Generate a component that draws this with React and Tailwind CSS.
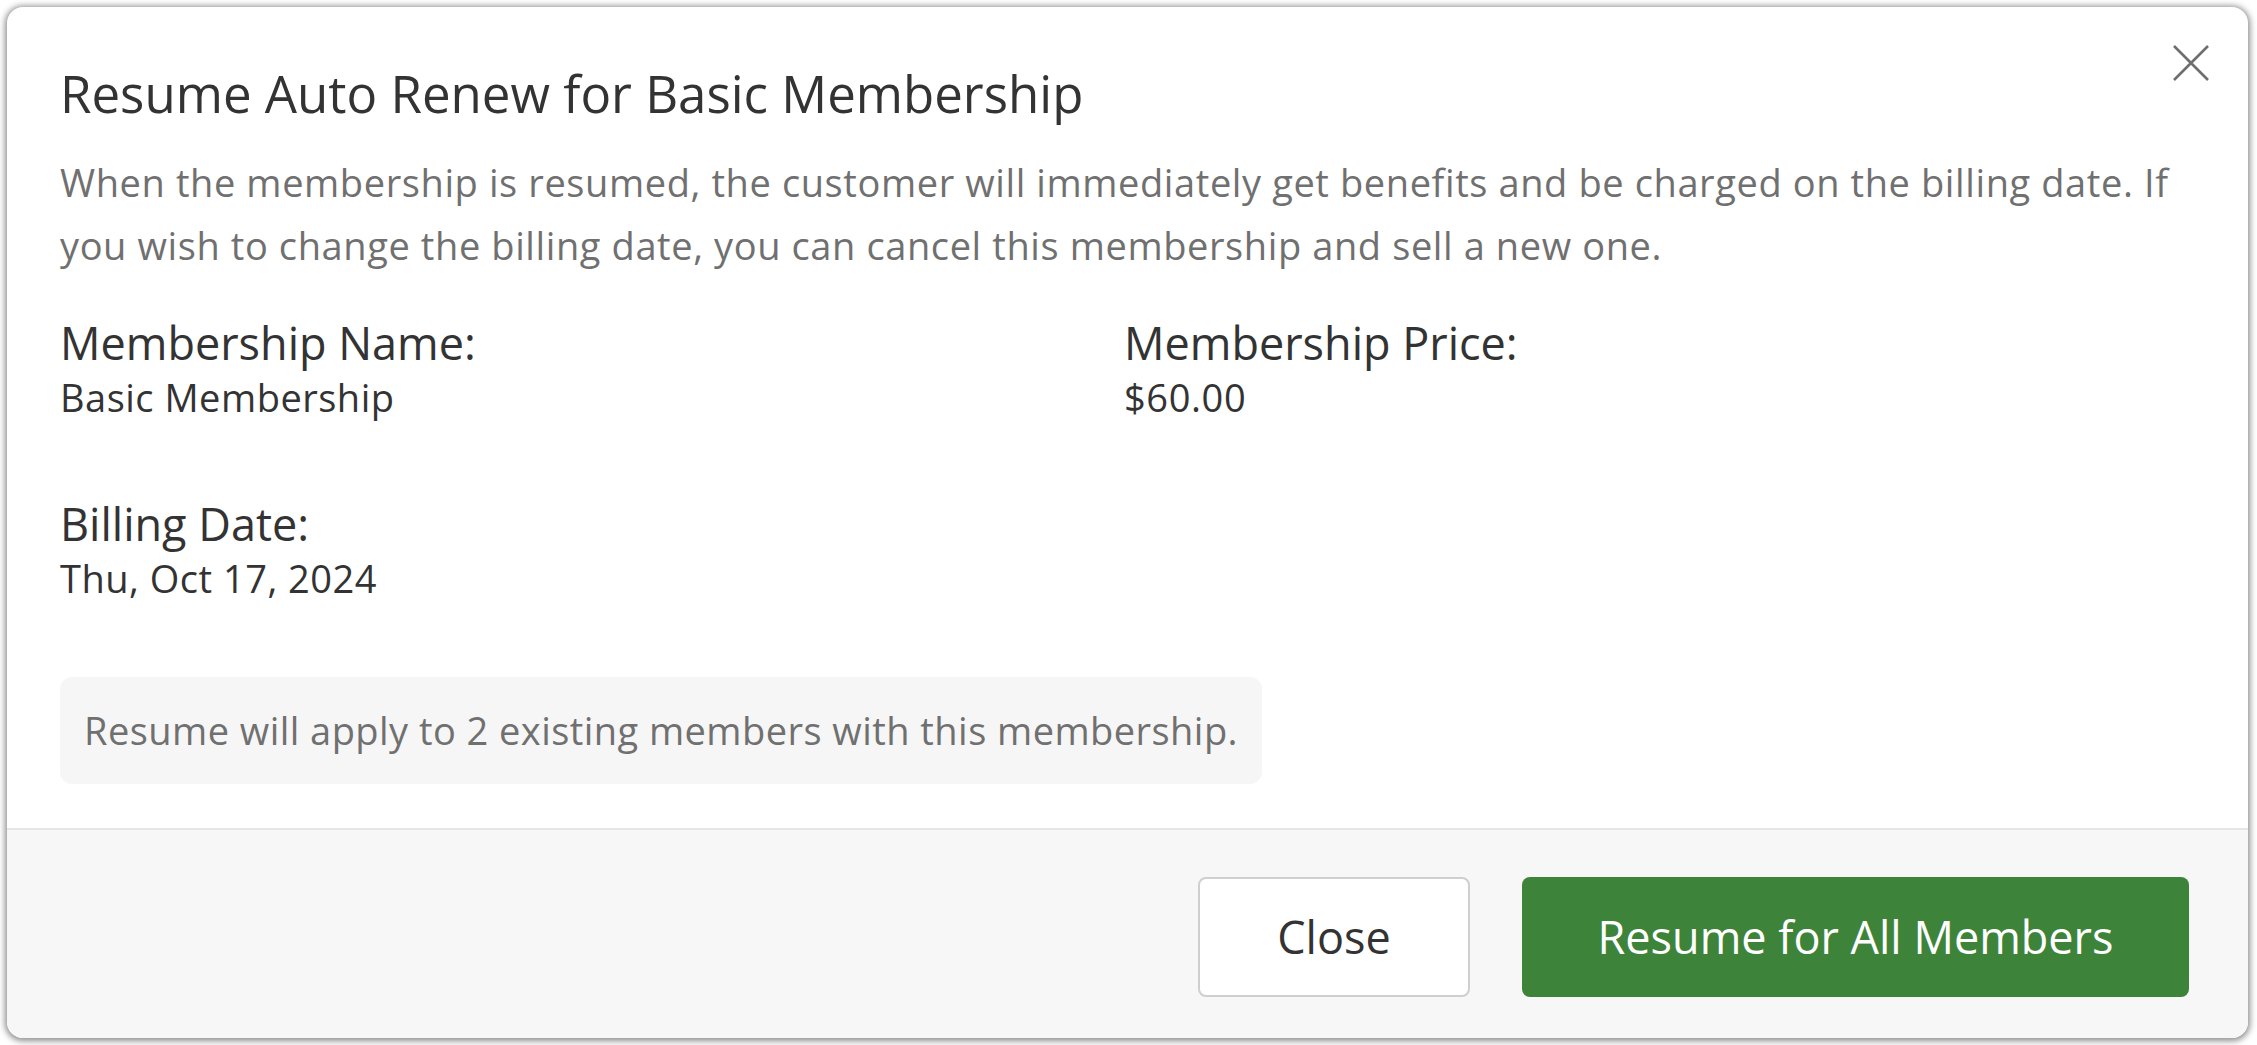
import React from 'react';

const ResumeModal = () => {
  return (
    <div className="relative w-[2241px] bg-white rounded-[16px] shadow-[0_1px_6px_2px_rgba(0,0,0,0.45)] overflow-hidden">
      {/* Close icon */}
      <button
        type="button"
        className="absolute top-[38px] right-[39px] w-[36px] h-[36px] flex items-center justify-center"
      >
        <svg width="36" height="36" viewBox="0 0 36 36" fill="none">
          <path d="M1 1 L35 35 M35 1 L1 35" stroke="#6e6e6e" strokeWidth="2.6" />
        </svg>
      </button>

      {/* Body */}
      <div className="pl-[53px] pr-[60px] pt-[56px] pb-[44px]">
        <h2 className="text-[51px] leading-[60px] text-[#333333] font-normal">
          Resume Auto Renew for Basic Membership
        </h2>
        <p className="mt-[28px] text-[38px] leading-[63px] tracking-[0.6px] text-[#707070]">
          <span className="block whitespace-nowrap">
            When the membership is resumed, the customer will immediately get benefits and be charged on the billing date. If
          </span>
          <span className="block whitespace-nowrap">
            you wish to change the billing date, you can cancel this membership and sell a new one.
          </span>
        </p>

        <div className="mt-[38px] grid grid-cols-2 gap-y-[73px]">
          <div>
            <div className="text-[45px] leading-[56px] text-[#333333]">Membership Name:</div>
            <div className="text-[38px] leading-[52px] tracking-[0.5px] text-[#333333]">Basic Membership</div>
          </div>
          <div>
            <div className="text-[45px] leading-[56px] text-[#333333]">Membership Price:</div>
            <div className="text-[38px] leading-[52px] tracking-[0.6px] text-[#333333]">$60.00</div>
          </div>
          <div>
            <div className="text-[45px] leading-[56px] text-[#333333]">Billing Date:</div>
            <div className="text-[38px] leading-[52px] tracking-[0.5px] text-[#333333]">Thu, Oct 17, 2024</div>
          </div>
        </div>

        <div className="mt-[73px] inline-flex items-center h-[107px] px-[24px] bg-[#f6f6f6] rounded-[12px]">
          <span className="text-[38px] tracking-[0.45px] text-[#707070] whitespace-nowrap">
            Resume will apply to 2 existing members with this membership.
          </span>
        </div>
      </div>

      {/* Footer */}
      <div className="flex justify-end items-center gap-[52px] pt-[47px] pb-[41px] pr-[59px] bg-[#f7f7f7] border-t-2 border-[#e6e6e6]">
        <button
          type="button"
          className="w-[272px] h-[120px] bg-white border-2 border-[#cfcfcf] rounded-[8px] text-[45px] text-[#333333]"
        >
          Close
        </button>
        <button
          type="button"
          className="w-[667px] h-[120px] bg-[#3d843a] rounded-[8px] text-[45px] text-white"
        >
          Resume for All Members
        </button>
      </div>
    </div>
  );
};

export default function App() {
  return (
    <div className="w-[2257px] h-[1045px] bg-white p-[7px] font-['Open_Sans',sans-serif]">
      <ResumeModal />
    </div>
  );
}
